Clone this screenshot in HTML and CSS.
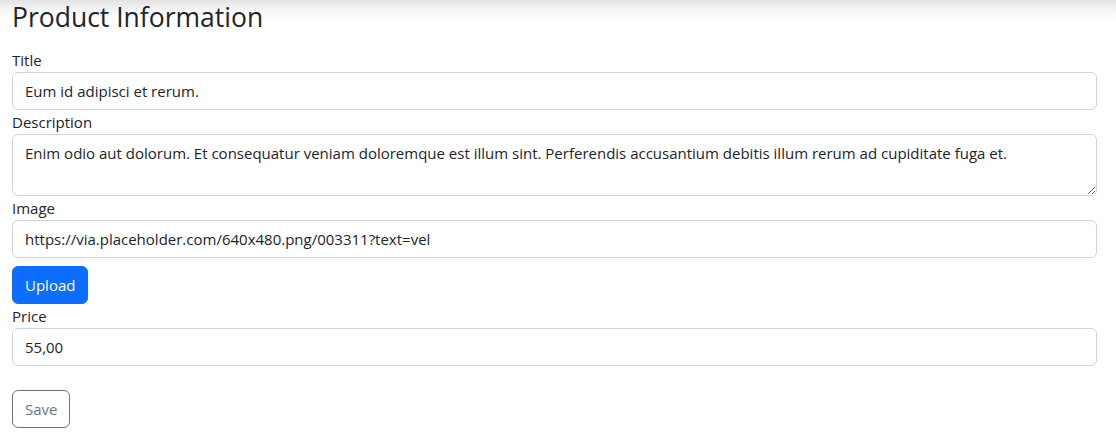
FILE: index.html
```html
<!DOCTYPE html>
<html lang="en">
<head>
<meta charset="utf-8">
<title>Product Information</title>
<link rel="stylesheet" href="styles.css">
</head>
<body>
<main class="page">
  <h2 class="page-title">Product Information</h2>
  <form class="product-form">
    <div class="field">
      <label class="field-label" for="title">Title</label>
      <input class="field-input" id="title" type="text" value="Eum id adipisci et rerum.">
    </div>
    <div class="field">
      <label class="field-label" for="description">Description</label>
      <textarea class="field-input field-textarea" id="description" rows="2">Enim odio aut dolorum. Et consequatur veniam doloremque est illum sint. Perferendis accusantium debitis illum rerum ad cupiditate fuga et.</textarea>
    </div>
    <div class="field">
      <label class="field-label" for="image">Image</label>
      <input class="field-input" id="image" type="text" value="https://via.placeholder.com/640x480.png/003311?text=vel">
    </div>
    <div class="upload-row">
      <button class="btn btn-primary" type="button">Upload</button>
    </div>
    <div class="field">
      <label class="field-label" for="price">Price</label>
      <input class="field-input" id="price" type="text" value="55,00">
    </div>
    <div class="actions">
      <button class="btn btn-outline" type="submit">Save</button>
    </div>
  </form>
</main>
</body>
</html>
```

FILE: styles.css
```css
* { box-sizing: border-box; }

html, body {
  margin: 0;
  padding: 0;
}

body {
  font-family: "Open Sans", "Noto Sans", "Liberation Sans", sans-serif;
  font-size: 15px;
  line-height: 24px;
  color: #212529;
  background: #fff linear-gradient(#e2e2e2 0, #ececec 5px, #f6f6f6 11px, #fcfcfc 17px, #fff 22px) no-repeat;
  background-size: 100% 24px;
}

.page {
  padding: 0 19px 0 12px;
}

.page-title {
  margin: 0 0 14px;
  font-size: 26.5px;
  font-weight: 400;
  line-height: 34px;
  color: #212529;
}

.product-form {
  display: flex;
  flex-direction: column;
}

.field {
  display: flex;
  flex-direction: column;
}

.field-label {
  display: block;
  font-size: 15px;
  line-height: 24px;
}

.field-input {
  display: block;
  width: 100%;
  height: 38px;
  padding: 6px 12px;
  font-family: inherit;
  font-size: 15px;
  line-height: 24px;
  color: #212529;
  background: #fff;
  border: 1px solid #ced4da;
  border-radius: 6px;
  outline: none;
}

.field-textarea {
  height: 62px;
  resize: vertical;
}

.upload-row {
  margin: 8px 0 0;
}

.btn {
  display: inline-block;
  height: 38px;
  padding: 6px 12px;
  font-family: inherit;
  font-size: 15px;
  line-height: 24px;
  border-radius: 6px;
  border: 1px solid transparent;
  cursor: pointer;
}

.btn-primary {
  color: #fff;
  background: #0d6efd;
  border-color: #0d6efd;
}

.btn-outline {
  color: #6c757d;
  background: #fff;
  border-color: #6c757d;
}

.actions {
  margin-top: 24px;
}
```
